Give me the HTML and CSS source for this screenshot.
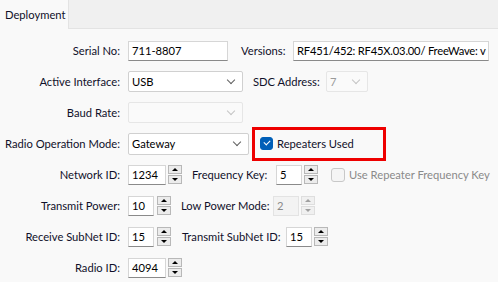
FILE: index.html
```html
<!DOCTYPE html>
<html lang="en">

<head>
    <meta charset="UTF-8">
    <meta name="viewport" content="width=device-width, initial-scale=1.0">
    <title>Deployment</title>
    <link rel="stylesheet" href="styles.css">
</head>

<body>
    <div class="window">
        <div class="tabs">
            <div class="tab">Deployment</div>
        </div>

        <div class="panel">
            <div class="row">
                <span class="label">Serial No:</span>
                <div class="box serial">711-8807</div>
                <span class="label2 versions-label">Versions:</span>
                <div class="box versions">RF451/452: RF45X.03.00/ FreeWave: v</div>
            </div>

            <div class="row">
                <span class="label">Active Interface:</span>
                <div class="combo interface">USB<span class="chev"></span></div>
                <span class="label2 sdc-label">SDC Address:</span>
                <div class="combo sdc disabled">7<span class="chev"></span></div>
            </div>

            <div class="row">
                <span class="label">Baud Rate:</span>
                <div class="combo interface disabled"><span class="chev"></span></div>
            </div>

            <div class="row">
                <span class="label">Radio Operation Mode:</span>
                <div class="combo mode">Gateway<span class="chev"></span></div>
                <label class="check highlighted">
                    <span class="tick checked"></span>Repeaters Used
                </label>
            </div>

            <div class="row">
                <span class="label">Network ID:</span>
                <div class="box wide-num">1234</div>
                <div class="spin"><span class="up"></span><span class="down"></span></div>
                <span class="label2 freq-label">Frequency Key:</span>
                <div class="box num">5</div>
                <div class="spin"><span class="up"></span><span class="down"></span></div>
                <label class="check disabled-check">
                    <span class="tick"></span>Use Repeater Frequency Key
                </label>
            </div>

            <div class="row">
                <span class="label">Transmit Power:</span>
                <div class="box num">10</div>
                <div class="spin gap3"><span class="up"></span><span class="down"></span></div>
                <span class="label2 low-label">Low Power Mode:</span>
                <div class="box num disabled">2</div>
                <div class="spin disabled"><span class="up"></span><span class="down"></span></div>
            </div>

            <div class="row">
                <span class="label">Receive SubNet ID:</span>
                <div class="box num">15</div>
                <div class="spin gap3"><span class="up"></span><span class="down"></span></div>
                <span class="label2 subnet-label">Transmit SubNet ID:</span>
                <div class="box num">15</div>
                <div class="spin"><span class="up"></span><span class="down"></span></div>
            </div>

            <div class="row">
                <span class="label">Radio ID:</span>
                <div class="box wide-num">4094</div>
                <div class="spin"><span class="up"></span><span class="down"></span></div>
            </div>
        </div>
    </div>
</body>

</html>
```

FILE: styles.css
```css
body {
    margin: 0;
    font-family: "Lato", "Noto Sans", sans-serif;
    font-size: 11.2px;
    color: #10102a;
    background: #f9f9f9;
}

.window {
    width: 498px;
    height: 282px;
    overflow: hidden;
}

.tabs {
    height: 28px;
    background: #f0f0f0;
    border-bottom: 1px solid #e3e3e3;
    display: flex;
}

.tab {
    width: 69px;
    height: 29px;
    background: #f9f9f9;
    border-right: 1px solid #e3e3e3;
    padding-left: 5px;
    box-sizing: border-box;
    line-height: 29px;
    margin-bottom: -1px;
}

.panel {
    padding-top: 6px;
}

.row {
    display: flex;
    align-items: center;
    height: 31px;
}

.label {
    width: 120px;
    text-align: right;
    margin-right: 8px;
    white-space: nowrap;
}

.label2 {
    white-space: nowrap;
}

.versions-label {
    width: 52px;
    margin-left: 13px;
}

.sdc-label {
    width: 73px;
    margin-left: 10px;
}

.freq-label {
    width: 84px;
    margin-left: 10px;
}

.low-label {
    width: 92px;
    margin-left: 10px;
}

.subnet-label {
    width: 104px;
    margin-left: 11px;
}

.box {
    height: 20px;
    box-sizing: border-box;
    background: #fff;
    border: 1px solid #d6d6d6;
    border-bottom-color: #8a8a8a;
    padding-left: 3px;
    line-height: 18px;
    color: #000;
    white-space: nowrap;
    overflow: hidden;
}

.box.disabled {
    background: #f3f3f3;
    border-color: #e3e3e3;
    color: #8a8a8a;
}

.serial {
    width: 100px;
}

.versions {
    width: 196px;
    letter-spacing: -0.2px;
}

.wide-num {
    width: 38px;
}

.num {
    width: 26px;
}

.combo {
    position: relative;
    height: 21px;
    box-sizing: border-box;
    background: #fff;
    border: 1px solid #d0d0d0;
    border-radius: 2px;
    padding-left: 3px;
    line-height: 19px;
    color: #000;
}

.combo.disabled {
    background: #fafafa;
    border-color: #e6e6e6;
    color: #9a9a9a;
}

.interface {
    width: 115px;
}

.mode {
    width: 121px;
    height: 22px;
    line-height: 20px;
}

.sdc {
    width: 42px;
}

.chev {
    position: absolute;
    right: 8px;
    top: 5px;
    width: 5px;
    height: 5px;
    border-right: 1px solid #606060;
    border-bottom: 1px solid #606060;
    transform: rotate(45deg);
}

.combo.disabled .chev {
    border-color: #c4c4c4;
}

.spin {
    display: flex;
    flex-direction: column;
    gap: 1px;
    margin-left: 2px;
}

.spin.gap3 {
    margin-left: 3px;
}

.spin span {
    position: relative;
    width: 14px;
    height: 9px;
    box-sizing: border-box;
    border: 1px solid #b8b8b8;
    background: #ececec;
}

.spin span::after {
    content: "";
    position: absolute;
    left: 3px;
    width: 0;
    height: 0;
    border-left: 3px solid transparent;
    border-right: 3px solid transparent;
}

.spin .up::after {
    top: 2px;
    border-bottom: 3px solid #000;
}

.spin .down::after {
    top: 2px;
    border-top: 3px solid #000;
}

.spin.disabled span {
    border-color: #dedede;
    background: #f0f0f0;
}

.spin.disabled .up::after {
    border-bottom-color: #a0a0a0;
}

.spin.disabled .down::after {
    border-top-color: #a0a0a0;
}

.check {
    display: flex;
    align-items: center;
    white-space: nowrap;
}

.tick {
    width: 13px;
    height: 13px;
    box-sizing: border-box;
    border-radius: 3px;
    border: 1px solid #bdbdbd;
    background: #f5f5f5;
    margin-right: 4px;
    position: relative;
}

.tick.checked {
    background: #005fb8;
    border-color: #005fb8;
}

.tick.checked::after {
    content: "";
    position: absolute;
    left: 3px;
    top: 2px;
    width: 5px;
    height: 3px;
    border-left: 1px solid #fff;
    border-bottom: 1px solid #fff;
    transform: rotate(-45deg);
}

/* annotation box drawn round the checkbox */
.highlighted {
    position: relative;
    margin-left: 11px;
}

.highlighted::before {
    content: "";
    position: absolute;
    left: -8px;
    top: -10px;
    width: 134px;
    height: 34px;
    box-sizing: border-box;
    border: 3px solid #ee0000;
}

.disabled-check {
    margin-left: 13px;
    color: #8a8a8a;
}

.disabled-check .tick {
    width: 14px;
    height: 14px;
    border-color: #c8c8c8;
}
```
